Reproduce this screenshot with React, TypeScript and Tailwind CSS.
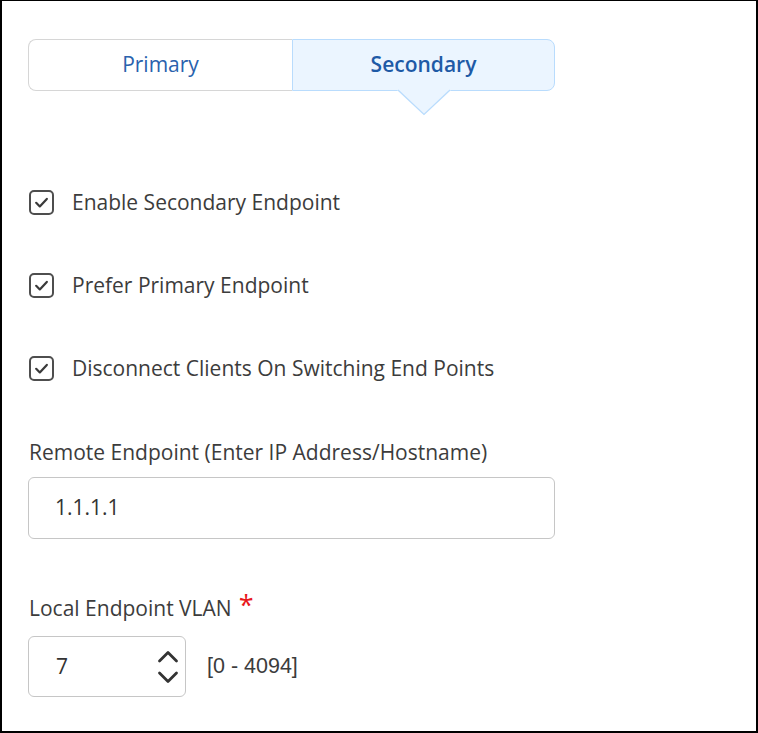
import React from "react";

function CheckRow({ label, className }: { label: string; className?: string }) {
  return (
    <div className={`flex items-center ${className ?? ""}`}>
      <div className="w-[25px] h-[25px] rounded-[5px] border-2 border-[#4e4e4e] flex items-center justify-center ml-[1px]">
        <svg width="17" height="17" viewBox="0 0 16 16" fill="none">
          <path d="M3 8.3 L6.4 11.7 L13 4.6" stroke="#3a3a3a" strokeWidth="2.1" strokeLinecap="round" strokeLinejoin="round" />
        </svg>
      </div>
      <span className="ml-[18px] text-[21px] leading-[28px] text-[#3c3c3c]">{label}</span>
    </div>
  );
}

export default function App() {
  return (
    <div
      className="w-[758px] h-[733px] bg-white border-t border-x-2 border-b-2 border-black box-border"
      style={{ fontFamily: '"Open Sans", "Noto Sans", sans-serif' }}
    >
      <div className="pl-[26px] pt-[38px] flex flex-col">
        <div className="relative flex w-[527px] h-[52px]">
          <div className="flex-1 flex items-center justify-center border border-[#d6d6d6] border-r-0 rounded-l-[8px] text-[21px] text-[#2a62ad]">
            Primary
          </div>
          <div className="w-[263px] flex items-center justify-center border border-[#b9dcfd] bg-[#ebf5ff] rounded-r-[8px] text-[21px] font-semibold text-[#1e5aa6]">
            Secondary
          </div>
          <svg className="absolute left-[369px] top-[50px]" width="54" height="27" viewBox="0 0 54 27">
            <polygon points="0,1 54,1 27,26" fill="#ebf5ff" />
            <polyline points="1,1 27,25.5 53,1" fill="none" stroke="#b9dcfd" strokeWidth="1.2" />
          </svg>
        </div>

        <CheckRow label="Enable Secondary Endpoint" className="mt-[97px]" />
        <CheckRow label="Prefer Primary Endpoint" className="mt-[55px]" />
        <CheckRow label="Disconnect Clients On Switching End Points" className="mt-[55px]" />

        <div className="mt-[56px] ml-[1px] text-[21px] leading-[28px] text-[#3c3c3c]">
          Remote Endpoint (Enter IP Address/Hostname)
        </div>
        <div className="mt-[11px] w-[527px] h-[62px] border border-[#c6c6c6] rounded-[6px] flex items-center pl-[26px] text-[21px] text-[#333]">
          1.1.1.1
        </div>

        <div className="mt-[55px] ml-[1px] flex items-center text-[21px] leading-[28px] text-[#3c3c3c]">
          Local Endpoint VLAN
          <span className="ml-[7px] text-[#e8161b] text-[27px] leading-[28px] relative top-[-3px]">*</span>
        </div>
        <div className="mt-[14px] flex items-center">
          <div className="w-[158px] h-[61px] border border-[#c6c6c6] rounded-[6px] flex items-center pl-[27px] pr-[6px] text-[21px] text-[#333]">
            <span className="flex-1">7</span>
            <div className="flex flex-col items-center gap-[8px]">
              <svg width="22" height="13" viewBox="0 0 22 13" fill="none">
                <path d="M2.5 11 L11 2.5 L19.5 11" stroke="#333" strokeWidth="2.8" strokeLinecap="round" strokeLinejoin="round" />
              </svg>
              <svg width="22" height="13" viewBox="0 0 22 13" fill="none">
                <path d="M2.5 2 L11 10.5 L19.5 2" stroke="#333" strokeWidth="2.8" strokeLinecap="round" strokeLinejoin="round" />
              </svg>
            </div>
          </div>
          <span
            className="ml-[21px] text-[21.5px] text-[#3c3c3c]"
            style={{ fontFamily: '"Liberation Sans", Arial, sans-serif' }}
          >
            [0 - 4094]
          </span>
        </div>
      </div>
    </div>
  );
}
